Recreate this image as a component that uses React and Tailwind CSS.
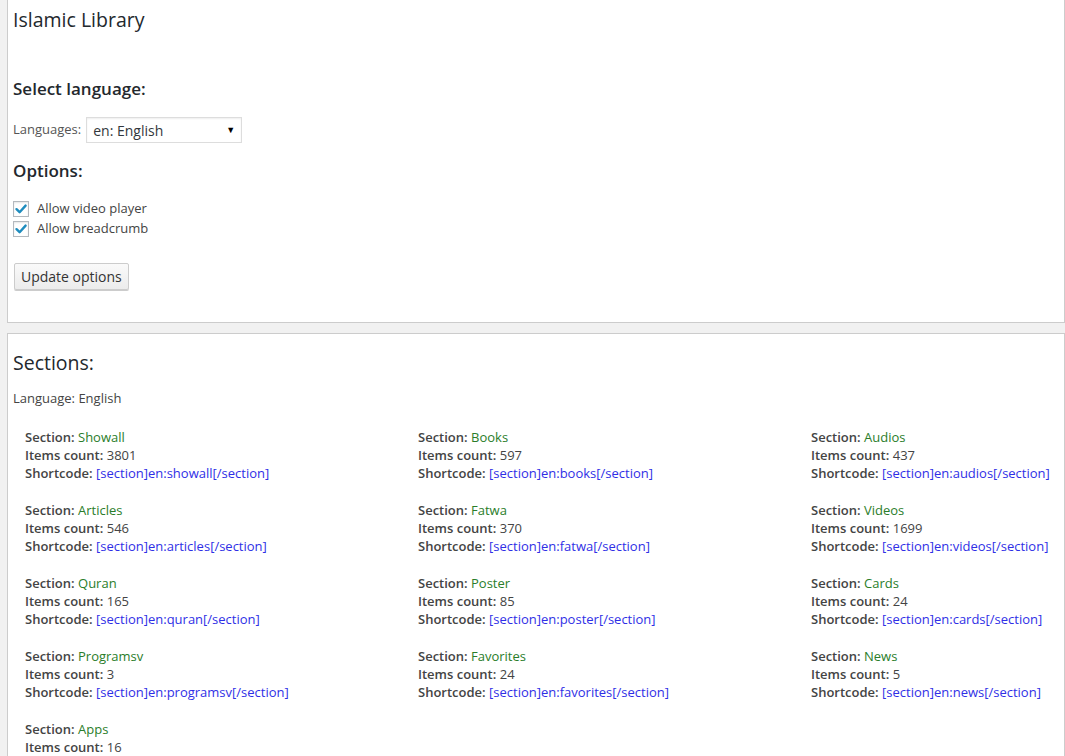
import React from 'react';

const sections = [
  { name: 'Showall', slug: 'showall', count: 3801 },
  { name: 'Books', slug: 'books', count: 597 },
  { name: 'Audios', slug: 'audios', count: 437 },
  { name: 'Articles', slug: 'articles', count: 546 },
  { name: 'Fatwa', slug: 'fatwa', count: 370 },
  { name: 'Videos', slug: 'videos', count: 1699 },
  { name: 'Quran', slug: 'quran', count: 165 },
  { name: 'Poster', slug: 'poster', count: 85 },
  { name: 'Cards', slug: 'cards', count: 24 },
  { name: 'Programsv', slug: 'programsv', count: 3 },
  { name: 'Favorites', slug: 'favorites', count: 24 },
  { name: 'News', slug: 'news', count: 5 },
  { name: 'Apps', slug: 'apps', count: 16 },
];

const Checkbox = () => (
  <span className="flex h-4 w-4 items-center justify-center border border-[#b4b9be] bg-white shadow-[inset_0_1px_2px_rgba(0,0,0,0.1)]">
    <svg width="14" height="14" viewBox="0 0 14 14">
      <path d="M2.5 7.2 L5.6 10.2 L11.6 3.6" fill="none" stroke="#1e8cbe" strokeWidth="2.4" strokeLinecap="round" strokeLinejoin="round" />
    </svg>
  </span>
);

const SectionItem = ({ item }) => (
  <div className="text-[13px] leading-[18px] text-[#444]">
    <div>
      <span className="font-semibold">Section:</span>{' '}
      <span className="text-[#2a7d2a]">{item.name}</span>
    </div>
    <div>
      <span className="font-semibold">Items count:</span> {item.count}
    </div>
    <div>
      <span className="font-semibold">Shortcode:</span>{' '}
      <span className="text-[#2f2fe6]">[section]en:{item.slug}[/section]</span>
    </div>
  </div>
);

export default function App() {
  return (
    <div className="min-h-[756px] bg-[#f1f1f1] font-['Open_Sans',sans-serif] text-[#444]">
      {/* plugin settings */}
      <div className="ml-[7px] border-x border-b border-[#ccc] bg-white px-[5px] pt-[6px] pb-[32px]">
        <h1 className="text-[19.5px] leading-[28px] text-[#23282d]">Islamic Library</h1>

        <h2 className="mt-[43px] text-[17px] font-semibold leading-[24px] text-[#23282d]">Select language:</h2>
        <div className="mt-[16px] flex items-center gap-[5px] text-[13px]">
          <span className="text-[#555]">Languages:</span>
          <div className="flex h-[26px] w-[156px] items-center justify-between border border-[#ddd] bg-white pl-[6px] pr-[6px] text-[14px] text-[#32373c] shadow-[inset_0_1px_2px_rgba(0,0,0,0.07)]">
            <span>en: English</span>
            <span className="text-[9px] text-black">▼</span>
          </div>
        </div>

        <h2 className="mt-[16px] text-[17px] font-semibold leading-[24px] text-[#23282d]">Options:</h2>
        <div className="mt-[16px] text-[13px]">
          <label className="flex h-[20px] items-center gap-[8px]">
            <Checkbox />
            <span>Allow video player</span>
          </label>
          <label className="flex h-[20px] items-center gap-[8px]">
            <Checkbox />
            <span>Allow breadcrumb</span>
          </label>
        </div>

        <button className="ml-px mt-[24px] h-[27px] rounded-[2px] border border-[#ccc] bg-gradient-to-b from-[#fafafa] to-[#ececec] px-[6px] text-[14px] leading-[25px] text-[#333] shadow-[0_1px_0_#ccc]">
          Update options
        </button>
      </div>

      {/* section list */}
      <div className="ml-[7px] mt-[10px] border-x border-t border-[#ccc] bg-white px-[5px] pt-[15px] pb-[20px]">
        <h2 className="text-[19.5px] leading-[28px] text-[#23282d]">Sections:</h2>
        <p className="mt-[12px] text-[13px] leading-[18px]">Language: English</p>
        <div className="ml-[12px] mt-[21px] grid grid-cols-[393px_393px_1fr] gap-y-[19px]">
          {sections.map((s) => (
            <SectionItem key={s.slug} item={s} />
          ))}
        </div>
      </div>
    </div>
  );
}
